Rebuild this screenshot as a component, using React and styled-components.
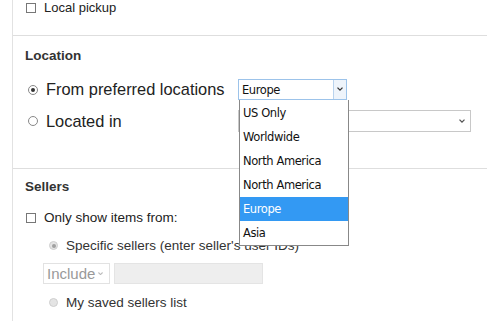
import React from "react";
import styled, { createGlobalStyle } from "styled-components";

const Global = createGlobalStyle`
  html, body { margin: 0; padding: 0; background: #fff; }
  body { font-family: Arial, "Liberation Sans", sans-serif; color: #222; width: 487px; height: 321px; overflow: hidden; }
`;

const Panel = styled.div`
  margin-left: 12px;
  border-left: 1px solid #e2e2e2;
  height: 321px;
  position: relative;
`;

const Section = styled.div`
  padding: ${(p) => p.$pad || "0 0 0 13px"};
  height: ${(p) => p.$h}px;
  box-sizing: border-box;
  border-bottom: ${(p) => (p.$last ? "none" : "1px solid #dedede")};
  position: relative;
`;

const Heading = styled.div`
  font-weight: bold;
  font-size: 13.5px;
  line-height: 15px;
  color: #333;
`;

const Row = styled.div`
  display: flex;
  align-items: center;
  height: ${(p) => p.$h || 15}px;
  margin-top: ${(p) => p.$mt || 0}px;
  margin-left: ${(p) => p.$ml || 0}px;
  font-size: ${(p) => p.$fs || 13}px;
  color: ${(p) => (p.$muted ? "#333" : "#222")};
`;

const Check = styled.span`
  width: 8px;
  height: 8px;
  border: 1px solid #777;
  background: #fff;
  margin-right: 8px;
  margin-top: 1px;
  flex: none;
`;

const Radio = styled.span`
  width: ${(p) => (p.$disabled ? 7 : 8)}px;
  height: ${(p) => (p.$disabled ? 7 : 8)}px;
  border-radius: 50%;
  border: 1px solid ${(p) => (p.$disabled ? "#cfcfcf" : "#888")};
  background: ${(p) => (p.$disabled ? "#e4e4e4" : "#fff")};
  margin-right: ${(p) => p.$mr || 8}px;
  flex: none;
  position: relative;
  &::after {
    content: "";
    display: ${(p) => (p.$checked ? "block" : "none")};
    position: absolute;
    left: ${(p) => (p.$disabled ? 1.5 : 2)}px;
    top: ${(p) => (p.$disabled ? 1.5 : 2)}px;
    width: 4px;
    height: 4px;
    border-radius: 50%;
    background: ${(p) => (p.$disabled ? "#a0a0a0" : "#333")};
  }
`;

const Label = styled.span`
  width: ${(p) => p.$w || "auto"};
  flex: none;
`;

const WinSelect = styled.div`
  box-sizing: border-box;
  width: ${(p) => p.$w}px;
  height: ${(p) => p.$h}px;
  border: 1px solid ${(p) => p.$bc || "#c8c8c8"};
  background: #fff;
  display: flex;
  align-items: center;
  font-family: "DejaVu Sans", Verdana, sans-serif;
  font-size: 11.5px;
  letter-spacing: -0.4px;
  color: #111;
`;

const SelText = styled.span`
  flex: 1;
  padding-left: 3px;
`;

const ArrowBox = styled.span`
  width: 12px;
  height: 100%;
  border-left: ${(p) => (p.$sep ? "1px solid #b9d3ee" : "none")};
  background: ${(p) => (p.$sep ? "#eef4fb" : "transparent")};
  display: flex;
  align-items: center;
  justify-content: center;
  margin-right: ${(p) => p.$mr || 0}px;
`;

const Chevron = ({ color = "#333", size = 6 }) => (
  <svg width={size} height={size * 0.7} viewBox="0 0 6 4">
    <path d="M0.5 0.5 L3 3 L5.5 0.5" fill="none" stroke={color} strokeWidth="1.3" />
  </svg>
);

const List = styled.ul`
  position: absolute;
  left: 226px;
  top: 64px;
  width: 108px;
  margin: 0;
  padding: 1px 0 0;
  list-style: none;
  border: 1px solid #888;
  border-top: none;
  background: #fff;
  z-index: 5;
  font-family: "DejaVu Sans", Verdana, sans-serif;
  font-size: 11.5px;
  letter-spacing: -0.4px;
`;

const Option = styled.li`
  height: 24px;
  line-height: 25px;
  padding-left: 3px;
  background: ${(p) => (p.$active ? "#3399f3" : "#fff")};
  color: ${(p) => (p.$active ? "#fff" : "#111")};
`;

const DisabledSelect = styled.div`
  box-sizing: border-box;
  width: 67px;
  height: 21px;
  border: 1px solid #e2e2e2;
  background: #fff;
  display: flex;
  align-items: center;
  justify-content: space-between;
  padding: 0 6px 0 3px;
  color: #999;
  font-size: 15px;
  margin-right: 4px;
`;

const DisabledInput = styled.div`
  box-sizing: border-box;
  width: 149px;
  height: 21px;
  border: 1px solid #e4e4e4;
  background: #eeeeee;
`;

export default function App() {
  const options = ["US Only", "Worldwide", "North America", "North America", "Europe", "Asia"];
  return (
    <>
      <Global />
      <Panel>
        <Section $h={36} $pad="0 0 0 13px">
          <Row $h={15}>
            <Check />
            <Label>Local pickup</Label>
          </Row>
        </Section>
        <Section $h={133} $pad="12px 0 0 12px">
          <Heading>Location</Heading>
          <Row $h={21} $mt={16} $fs={16.4} $ml={3}>
            <Radio $checked />
            <Label $w="192px">From preferred locations</Label>
            <WinSelect $w={109} $h={21} $bc="#9cc3ea">
              <SelText>Europe</SelText>
              <ArrowBox $sep>
                <Chevron />
              </ArrowBox>
            </WinSelect>
          </Row>
          <Row $h={22} $mt={10} $fs={16.4} $ml={3}>
            <Radio />
            <Label $w="192px">Located in</Label>
            <WinSelect $w={233} $h={22}>
              <SelText />
              <ArrowBox $mr={2}>
                <Chevron color="#555" />
              </ArrowBox>
            </WinSelect>
          </Row>
          <List>
            {options.map((o, i) => (
              <Option key={i} $active={i === 4}>{o}</Option>
            ))}
          </List>
        </Section>
        <Section $h={152} $last $pad="10px 0 0 12px">
          <Heading>Sellers</Heading>
          <Row $h={15} $mt={16} $ml={1} $fs={13.5}>
            <Check />
            <Label>Only show items from:</Label>
          </Row>
          <Row $h={15} $mt={13} $ml={24} $fs={13.5} $muted>
            <Radio $checked $disabled $mr={8} />
            <Label>Specific sellers (enter seller's user IDs)</Label>
          </Row>
          <Row $h={21} $mt={10} $ml={18}>
            <DisabledSelect>
              <span>Include</span>
              <Chevron color="#bbb" size={5} />
            </DisabledSelect>
            <DisabledInput />
          </Row>
          <Row $h={15} $mt={11} $ml={24} $fs={13.5} $muted>
            <Radio $disabled $mr={8} />
            <Label>My saved sellers list</Label>
          </Row>
        </Section>
      </Panel>
    </>
  );
}
